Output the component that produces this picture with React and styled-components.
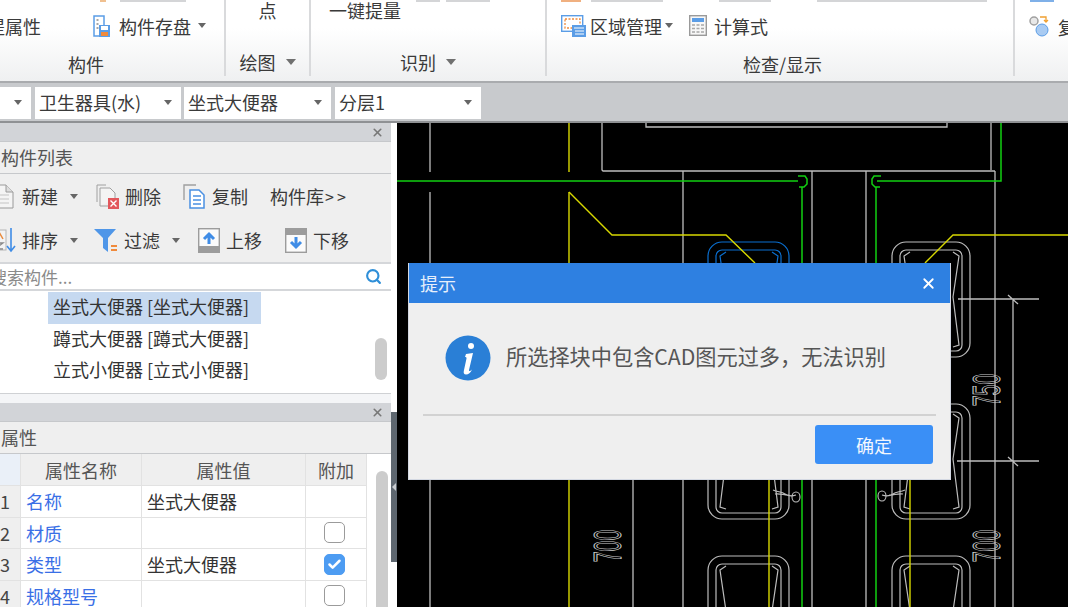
import React from "react"
import styled, { createGlobalStyle } from "styled-components"
import { X, Search, Check } from "lucide-react"

const GlobalStyle = createGlobalStyle`
  html, body {
    margin: 0;
    height: 100%;
    overflow: hidden;
    background: #000;
  }
  body, button {
    font-family: "Noto Sans CJK SC", "Liberation Sans", sans-serif;
  }
`

const Page = styled.div`
  position: relative;
  width: 1068px;
  height: 607px;
  overflow: hidden;
  display: flex;
  flex-direction: column;
  color: #3a3a3a;
  font-size: 18px;
`

// ribbon
const Ribbon = styled.div`
  height: 81px;
  flex: none;
  display: flex;
  margin-left: -52px;
  background: linear-gradient(#ffffff 35%, #eff0f1);
  border-bottom: 2px solid #a9abae;
`
const Group = styled.div`
  width: ${(p) => p.$w}px;
  flex: none;
  height: 76px;
  position: relative;
  display: flex;
  flex-direction: column;
  border-right: 2px solid #d9dadc;
  box-sizing: border-box;
  &:last-child {
    border-right: 0;
  }
`
const GroupBody = styled.div`
  height: 48px;
  padding: ${(p) => p.$pad || "5px 0 0 0"};
  box-sizing: border-box;
  display: flex;
  align-items: ${(p) => (p.$top ? "flex-start" : "center")};
  justify-content: ${(p) => (p.$center ? "center" : "flex-start")};
`
const GroupLabel = styled.div`
  display: flex;
  justify-content: center;
  align-items: center;
  gap: 10px;
  height: 24px;
  line-height: 24px;
  margin-top: ${(p) => (p.$lift ? 2 : 6)}px;
  padding-left: ${(p) => p.$pl || 0}px;
`
const RibbonItem = styled.div`
  display: flex;
  align-items: center;
  gap: ${(p) => p.$gap || 6}px;
  margin-left: ${(p) => p.$ml || 0}px;
  white-space: nowrap;
`
const TopText = styled.span`
  line-height: 20px;
  white-space: nowrap;
`
const TopStub = styled.span`
  width: ${(p) => p.$w}px;
  height: 2px;
  margin-left: ${(p) => p.$ml}px;
  background: ${(p) => p.$c || "#d4d5d7"};
  flex: none;
`
const TopStrip = styled.div`
  position: absolute;
  top: 0;
  left: ${(p) => p.$x}px;
  display: flex;
`
const Caret = styled.i`
  display: inline-block;
  width: 0;
  height: 0;
  flex: none;
  margin-left: ${(p) => p.$ml || 0}px;
  border-left: ${(p) => p.$s || 4.5}px solid transparent;
  border-right: ${(p) => p.$s || 4.5}px solid transparent;
  border-top: ${(p) => (p.$s ? p.$s + 0.5 : 5)}px solid ${(p) => p.$c || "#666"};
`

// combo bar
const ComboBar = styled.div`
  height: 36px;
  flex: none;
  background: #c8cacd;
  border-bottom: 2px solid #8f9194;
  display: flex;
  align-items: center;
  gap: 3px;
  margin-left: -60px;
  padding-top: 2px;
  box-sizing: content-box;
`
const Combo = styled.div`
  width: ${(p) => p.$w}px;
  height: 32px;
  flex: none;
  background: #fff;
  display: flex;
  align-items: center;
  justify-content: space-between;
  padding: 0 9px 2px 4px;
  box-sizing: border-box;
  margin-right: ${(p) => p.$mr || 0}px;
`

// main area
const Main = styled.div`
  flex: 1;
  min-height: 0;
  display: flex;
`
const Side = styled.div`
  width: 397px;
  flex: none;
  display: flex;
  background: #fff;
`
const Panels = styled.div`
  width: 391px;
  flex: none;
  display: flex;
  flex-direction: column;
  background: #f2f3f5;
`
const Strip = styled.div`
  flex: 1;
  padding-top: 289px;
  background: #fff;
`
const Grip = styled.div`
  height: 150px;
  background: #5e6770;
  display: flex;
  align-items: center;
  justify-content: center;
  &::after {
    content: "";
    border-right: 4px solid #c8ccd0;
    border-top: 4px solid transparent;
    border-bottom: 4px solid transparent;
  }
`
const PanelHead = styled.div`
  height: 18px;
  flex: none;
  background: #d2d4d8;
  display: flex;
  align-items: center;
  justify-content: flex-end;
  padding-right: 7px;
  color: #777;
`
const PanelTitle = styled.div`
  height: 31px;
  flex: none;
  line-height: 30px;
  padding-left: 1px;
  background: #efefef;
  border-top: 1px solid #c6c8cb;
  border-bottom: 1px solid #c6c8cb;
  color: #555;
  white-space: nowrap;
`
const Tools = styled.div`
  height: 88px;
  flex: none;
  background: #efefef;
  border-bottom: 2px solid #d5d7da;
  display: flex;
  flex-direction: column;
`
const ToolRow = styled.div`
  height: 44px;
  display: flex;
  align-items: center;
  margin-left: -8px;
`
const Tool = styled.div`
  width: ${(p) => p.$w}px;
  flex: none;
  display: flex;
  align-items: center;
  white-space: nowrap;
  box-sizing: border-box;
  gap: ${(p) => p.$gap || 6}px;
`
const Angle = styled.span`
  letter-spacing: 3px;
  font-size: 16px;
`
const SearchRow = styled.div`
  height: 25px;
  flex: none;
  background: #fff;
  border-bottom: 2px solid #d5d7da;
  display: flex;
  align-items: center;
  justify-content: space-between;
  padding-right: 9px;
  color: #8a8a8a;
  font-size: 17px;
`
const SearchText = styled.span`
  margin-left: -10px;
`
const ListBox = styled.div`
  height: 103px;
  flex: none;
  background: #fff;
  border-bottom: 1px solid #cfd1d4;
  display: flex;
  justify-content: space-between;
  padding-top: 1px;
  box-sizing: border-box;
`
const Rows = styled.div`
  margin-left: 48px;
  display: flex;
  flex-direction: column;
`
const ListRow = styled.div`
  width: 213px;
  height: 31.5px;
  line-height: 29px;
  padding-left: 5px;
  box-sizing: border-box;
  white-space: nowrap;
  color: #333;
  background: ${(p) => (p.$on ? "#c6d9f0" : "transparent")};
`
const Thumb = styled.div`
  width: 12px;
  height: ${(p) => p.$h}px;
  margin: ${(p) => p.$mt}px ${(p) => p.$mr}px 0 0;
  background: #cccccc;
  border-radius: 6px;
  flex: none;
`
const PanelGap = styled.div`
  height: 9px;
  flex: none;
  background: #f4f5f7;
`
const PropsWrap = styled.div`
  flex: 1;
  min-height: 0;
  background: #fff;
  display: flex;
  justify-content: space-between;
  overflow: hidden;
`
const PropsTable = styled.div`
  width: 367px;
  display: flex;
  flex-direction: column;
`
const PropRow = styled.div`
  height: ${(p) => p.$h || 31.5}px;
  flex: none;
  display: grid;
  grid-template-columns: 21px 121px 164px 61px;
`
const Cell = styled.div`
  display: flex;
  align-items: center;
  justify-content: ${(p) => (p.$center ? "center" : "flex-start")};
  padding-left: ${(p) => (p.$center ? 0 : 5)}px;
  border-right: 1px solid #e2e2e2;
  border-bottom: 1px solid #e2e2e2;
  box-sizing: border-box;
  background: ${(p) => p.$bg || "#fff"};
  color: ${(p) => p.$c || "#333"};
  white-space: nowrap;
  overflow: hidden;
`
const NumCell = styled(Cell)`
  padding-left: 0;
  background: ${(p) => p.$bg || "#efefef"};
  color: #444;
`
const CheckBox = styled.span`
  width: 21px;
  height: 21px;
  margin-right: 4px;
  border-radius: 5px;
  box-sizing: border-box;
  display: flex;
  align-items: center;
  justify-content: center;
  background: ${(p) => (p.$on ? "#4d9cf2" : "#fff")};
  border: 1px solid ${(p) => (p.$on ? "#4d9cf2" : "#9b9b9b")};
  color: #fff;
`
const Canvas = styled.svg`
  display: block;
  flex: 1;
  height: 484px;
  background: #000;
`

// dialog
const Dialog = styled.div`
  position: absolute;
  left: 408px;
  top: 263px;
  width: 543px;
  height: 217px;
  box-sizing: border-box;
  border: 1px solid #d3d8e2;
  border-top: 0;
  background: #efefef;
  display: flex;
  flex-direction: column;
`
const DialogHead = styled.div`
  height: 40px;
  flex: none;
  background: #2e80e1;
  color: #e6effb;
  display: flex;
  align-items: center;
  justify-content: space-between;
  padding: 0 13px 0 11px;
`
const DialogBody = styled.div`
  height: 113px;
  flex: none;
  margin: 0 14px;
  border-bottom: 2px solid #d2d2d2;
  box-sizing: border-box;
  display: flex;
  align-items: center;
  gap: 15px;
  padding: 0 0 2px 22px;
`
const Message = styled.span`
  font-size: 21.2px;
  line-height: 30px;
  margin-top: -3px;
  color: #555;
  white-space: nowrap;
`
const DialogFoot = styled.div`
  display: flex;
  justify-content: flex-end;
  padding: 9px 17px 0 0;
`
const OkButton = styled.button`
  width: 118px;
  height: 39px;
  border: 0;
  border-radius: 3px;
  background: #3a8ff6;
  color: #f2f7fe;
  font-size: 18px;
  padding: 0;
`

const NewIcon = () => (
  <svg width="22" height="25" viewBox="0 0 22 25">
    <path d="M1 1h13l7 7v16H1z" fill="#f4f4f4" stroke="#9a9a9a" />
    <path d="M14 1v7h7" fill="#ddd" stroke="#9a9a9a" />
    <path d="M4 11h13M4 15h13M4 19h13" stroke="#c4c4c4" />
  </svg>
)
const DeleteIcon = () => (
  <svg width="23" height="25" viewBox="0 0 23 25">
    <path d="M1 18V1h9" fill="none" stroke="#a0a0a0" />
    <path d="M4 22V4h10l5 5v6" fill="#f4f4f4" stroke="#a0a0a0" />
    <path d="M4 22h8" stroke="#a0a0a0" />
    <rect x="12" y="14" width="11" height="11" fill="#e2575c" />
    <path d="M14.5 16.5l6 6M20.500 16.500l-6 6" stroke="#fff" strokeWidth="1.400" />
  </svg>
)
const CopyIcon = () => (
  <svg width="23" height="25" viewBox="0 0 23 25">
    <path d="M1 16V1h12" fill="none" stroke="#a0a0a0" strokeWidth="1.400" />
    <path d="M7 6h9l5 5v13H7z" fill="#fff" stroke="#4a90e2" strokeWidth="1.500" />
    <path d="M10 12h8M10 16h8M10 20h8" stroke="#4a90e2" strokeWidth="1.400" />
  </svg>
)
const SortIcon = () => (
  <svg width="25" height="26" viewBox="0 0 25 26">
    <rect x="0" y="3" width="14" height="20" fill="#f3f3f3" stroke="#b5b5b5" />
    <path d="M3 12l4-7 4 7" fill="none" stroke="#e98a3c" strokeWidth="1.500" />
    <path d="M3 16h8l-8 6h8" fill="none" stroke="#8a8a8a" strokeWidth="1.300" />
    <path d="M19 1v22M15 19l4 5 4-5" fill="none" stroke="#3f8ce6" strokeWidth="1.600" />
  </svg>
)
const FilterIcon = () => (
  <svg width="24" height="25" viewBox="0 0 24 25">
    <path d="M0 1h22l-8 9v14l-5-4V10z" fill="#4f96e8" />
    <path d="M17 18h6M17 22h6" stroke="#f08a3c" strokeWidth="1.800" />
  </svg>
)
const MoveIcon = ({ down }) => (
  <svg width="22" height="25" viewBox="0 0 22 25">
    <rect x="0.700" y="0.700" width="20.600" height="23.600" fill="#fbfbfb" stroke="#9c9c9c" strokeWidth="1.400" />
    <rect x="0" y={down ? 0 : 18} width="22" height="7" fill="#9c9c9c" />
    {down ? (
      <path d="M11 9v10M6 14l5 5 5-5" fill="none" stroke="#3f8ce6" strokeWidth="3" />
    ) : (
      <path d="M11 16V6M6 11l5-5 5 5" fill="none" stroke="#3f8ce6" strokeWidth="3" />
    )}
  </svg>
)
const StoreIcon = () => (
  <svg width="17" height="22" viewBox="0 0 17 22">
    <path d="M1 1h10v20H1z" fill="#fff" stroke="#5b9de6" strokeWidth="1.500" />
    <path d="M3.500 5h2M3.500 9h2M3.500 13h2" stroke="#8a8a8a" strokeWidth="1.300" />
    <rect x="6" y="10" width="11" height="12" fill="#5b9de6" />
    <rect x="8" y="11" width="7" height="4" fill="#fff" />
    <rect x="8" y="17" width="7" height="4" fill="#f08a3c" />
  </svg>
)
const RegionIcon = () => (
  <svg width="25" height="22" viewBox="0 0 25 22">
    <rect x="0.700" y="0.700" width="21" height="15.600" fill="#fff" stroke="#5b9de6" strokeWidth="1.400" />
    <rect x="4" y="4" width="15" height="9" fill="none" stroke="#f08a3c" strokeWidth="1.300" strokeDasharray="2 1.500" />
    <rect x="11" y="10" width="14" height="12" fill="#5b9de6" />
    <path d="M13 13h10M14 16h9M14 19h9" stroke="#fff" />
  </svg>
)
const CalcIcon = () => (
  <svg width="18" height="21" viewBox="0 0 18 21">
    <rect x="0.700" y="0.700" width="16.600" height="19.600" fill="#f7f7f7" stroke="#9a9a9a" strokeWidth="1.400" />
    <rect x="3" y="3" width="12" height="4" fill="#5b9de6" />
    <path d="M3 10h3M7.500 10h3M12 10h3M3 13.500h3M7.500 13.500h3M12 13.500h3M3 17h3M7.500 17h3M12 17h3" stroke="#a8a8a8" strokeWidth="1.600" />
  </svg>
)
const MatchIcon = () => (
  <svg width="24" height="24" viewBox="0 0 24 24">
    <circle cx="5" cy="6" r="4" fill="#e8e8e8" stroke="#a0a0a0" strokeWidth="1.500" />
    <path d="M11 2h6v5M15 5l2 2 2-2" fill="none" stroke="#f0a030" strokeWidth="1.300" />
    <circle cx="13" cy="15" r="6" fill="#a9cbf2" stroke="#5b9de6" />
    <path d="M19 13a6 6 0 0 1-4 10 6 6 0 0 0 4-10z" fill="#3f8ce6" />
  </svg>
)
const InfoIcon = () => (
  <svg width="46" height="46" viewBox="0 0 46 46">
    <circle cx="23" cy="23" r="22.500" fill="#2a7fd6" />
    <circle cx="26" cy="11" r="3" fill="#fff" />
    <path d="M21 19l7-1-4 17c-.3 1.500.8 1.500 3-.5-1.500 3.500-3.500 5-6 5-2 0-2.600-1.500-2.200-3.500l2.700-12.500c.2-1-.3-1.500-1.500-1.500z" fill="#fff" />
  </svg>
)

const Fixture = ({ x, w, top, color = "#bdbdbd" }) => {
  const r = x + w
  return (
    <g fill="none" stroke={color} strokeWidth="1.200">
      <rect x={x} y={top} width={w} height="115" rx="14" />
      <rect x={x + 8} y={top + 8} width={w - 16} height="101" rx="6" />
      <polyline points={`${x + 18},${top + 10} ${x + 12},${top + 14} ${x + 18},${top + 55} ${x + 12},${top + 103} ${x + 18},${top + 105}`} />
      <polyline points={`${r - 17},${top + 10} ${r - 11},${top + 14} ${r - 17},${top + 55} ${r - 11},${top + 103} ${r - 17},${top + 105}`} />
    </g>
  )
}

const Drawing = () => (
  <Canvas viewBox="397 123 671 484">
    <g fill="none" stroke="#bdbdbd" strokeWidth="1.300">
      <path d="M430 123v49M430 192v415" />
      <path d="M602 123v47l1 1h392M991 123v47" />
      <path d="M646 123v4h301v-4" />
      <path d="M683 171v436M812 171v436M866 171v436M995 171v436M633 470v137" />
      <path d="M958 299h81M957 461h82M1013 299v308M1008 295l10 9M1008 457l10 9" />
    </g>
    <Fixture x={708} w={81} top={242} color="#0a6fd0" />
    <Fixture x={708} w={81} top={404} />
    <Fixture x={708} w={81} top={556} />
    <Fixture x={892} w={78} top={242} />
    <Fixture x={892} w={78} top={404} />
    <Fixture x={892} w={78} top={556} />
    <g fill="none" stroke="#d8d800" strokeWidth="1.400">
      <path d="M569 123v49M569 192v415" />
      <path d="M569 192l43 43h114l29 28" />
      <path d="M1068 235H953l-28 28" />
      <path d="M769 470v137M910 470v137" />
    </g>
    <g fill="none" stroke="#12d012" strokeWidth="1.500">
      <path d="M397 181h401M877 181h124V123" />
      <path d="M798 176h7l2 3v5l-3 3h-5M802 187v420" />
      <path d="M881 176h-7l-2 3v5l3 3h5M876 187v420" />
    </g>
    <g fill="none" stroke="#bdbdbd" strokeWidth="1.100">
      <path d="M773 490c5 2 9 2 12 4s8 2 11 1M775 494c6-1 10 2 14 1" />
      <ellipse cx="796" cy="497" rx="4" ry="5" />
      <path d="M905 490c-5 2-9 2-12 4s-8 2-11 1M903 494c-6-1-10 2-14 1" />
      <ellipse cx="882" cy="496" rx="4" ry="5" />
    </g>
    <g fill="none" stroke="#c8c8c8" strokeWidth="1.100" fontFamily="Liberation Sans, sans-serif" fontSize="39" textAnchor="middle">
      <text transform="translate(621 546) rotate(-90) scale(0.5 1)">700</text>
      <text transform="translate(1000 546) rotate(-90) scale(0.5 1)">700</text>
      <text transform="translate(1000 390) rotate(-90) scale(0.5 1)">750</text>
    </g>
  </Canvas>
)

const App = () => (
  <Page>
    <GlobalStyle />
    <Ribbon>
      <Group $w={278}>
        <TopStrip $x={152}>
          <TopStub $w={6} $ml={0} $c="#f0c090" />
          <TopStub $w={66} $ml={14} />
        </TopStrip>
        <GroupBody>
          <RibbonItem $ml={39}>提属性</RibbonItem>
          <RibbonItem $ml={52} $gap={9}>
            <StoreIcon />
            构件存盘
            <Caret $ml={-2} />
          </RibbonItem>
        </GroupBody>
        <GroupLabel>构件</GroupLabel>
      </Group>
      <Group $w={85}>
        <GroupBody $top $center $pad="0">
          <TopText>点</TopText>
        </GroupBody>
        <GroupLabel $lift>
          绘图
          <Caret $s={5.5} $c="#707070" />
        </GroupLabel>
      </Group>
      <Group $w={236}>
        <GroupBody $top $pad="0 0 0 18px">
          <TopText>一键提量</TopText>
          <TopStub $w={24} $ml={15} />
          <TopStub $w={44} $ml={6} />
        </GroupBody>
        <GroupLabel $lift>
          识别
          <Caret $s={5.5} $c="#707070" />
        </GroupLabel>
      </Group>
      <Group $w={468}>
        <TopStrip $x={14}>
          <TopStub $w={20} $ml={0} $c="#f0b080" />
          <TopStub $w={72} $ml={10} />
          <TopStub $w={52} $ml={56} />
          <TopStub $w={170} $ml={46} />
        </TopStrip>
        <GroupBody $pad="5px 0 0 14px">
          <RibbonItem $gap={4}>
            <RegionIcon />
            区域管理
            <Caret $ml={-1} />
          </RibbonItem>
          <RibbonItem $ml={16} $gap={7}>
            <CalcIcon />
            计算式
          </RibbonItem>
        </GroupBody>
        <GroupLabel $pl={5}>检查/显示</GroupLabel>
      </Group>
      <Group $w={120}>
        <TopStrip $x={15}>
          <TopStub $w={24} $ml={0} $c="#7fb0e8" />
        </TopStrip>
        <GroupBody $pad="5px 0 0 14px">
          <RibbonItem $gap={5}>
            <MatchIcon />
            复制
          </RibbonItem>
        </GroupBody>
      </Group>
    </Ribbon>
    <ComboBar>
      <Combo $w={91} $mr={1}>
        <span>给排水</span>
        <Caret />
      </Combo>
      <Combo $w={146}>
        <span>卫生器具(水)</span>
        <Caret />
      </Combo>
      <Combo $w={147} $mr={1}>
        <span>坐式大便器</span>
        <Caret />
      </Combo>
      <Combo $w={146}>
        <span>分层1</span>
        <Caret />
      </Combo>
    </ComboBar>
    <Main>
      <Side>
        <Panels>
          <PanelHead>
            <X size={13} strokeWidth={3} />
          </PanelHead>
          <PanelTitle>构件列表</PanelTitle>
          <Tools>
            <ToolRow>
              <Tool $w={104} $gap={8}>
                <NewIcon />
                新建
                <Caret $ml={4} />
              </Tool>
              <Tool $w={87}>
                <DeleteIcon />
                删除
              </Tool>
              <Tool $w={87}>
                <CopyIcon />
                复制
              </Tool>
              <Tool $w={90} $gap={1}>
                构件库<Angle>&gt;&gt;</Angle>
              </Tool>
            </ToolRow>
            <ToolRow>
              <Tool $w={102} $gap={5}>
                <SortIcon />
                排序
                <Caret $ml={7} />
              </Tool>
              <Tool $w={104}>
                <FilterIcon />
                过滤
                <Caret $ml={6} />
              </Tool>
              <Tool $w={87}>
                <MoveIcon />
                上移
              </Tool>
              <Tool $w={80}>
                <MoveIcon down />
                下移
              </Tool>
            </ToolRow>
          </Tools>
          <SearchRow>
            <SearchText>搜索构件...</SearchText>
            <Search size={17} strokeWidth={3} color="#2f8fd8" />
          </SearchRow>
          <ListBox>
            <Rows>
              <ListRow $on>坐式大便器 [坐式大便器]</ListRow>
              <ListRow>蹲式大便器 [蹲式大便器]</ListRow>
              <ListRow>立式小便器 [立式小便器]</ListRow>
            </Rows>
            <Thumb $h={42} $mt={46} $mr={4} />
          </ListBox>
          <PanelGap />
          <PanelHead>
            <X size={13} strokeWidth={3} />
          </PanelHead>
          <PanelTitle>属性</PanelTitle>
          <PropsWrap>
            <PropsTable>
              <PropRow $h={32}>
                <NumCell $bg="#eaf0f8" />
                <Cell $center $bg="#efefef" $c="#555">属性名称</Cell>
                <Cell $center $bg="#efefef" $c="#555">属性值</Cell>
                <Cell $center $bg="#efefef" $c="#555">附加</Cell>
              </PropRow>
              <PropRow>
                <NumCell>1</NumCell>
                <Cell $c="#3a6fe6">名称</Cell>
                <Cell>坐式大便器</Cell>
                <Cell $center />
              </PropRow>
              <PropRow>
                <NumCell>2</NumCell>
                <Cell $c="#3a6fe6">材质</Cell>
                <Cell />
                <Cell $center>
                  <CheckBox />
                </Cell>
              </PropRow>
              <PropRow>
                <NumCell>3</NumCell>
                <Cell $c="#3a6fe6">类型</Cell>
                <Cell>坐式大便器</Cell>
                <Cell $center>
                  <CheckBox $on>
                    <Check size={15} strokeWidth={4} />
                  </CheckBox>
                </Cell>
              </PropRow>
              <PropRow>
                <NumCell>4</NumCell>
                <Cell $c="#3a6fe6">规格型号</Cell>
                <Cell />
                <Cell $center>
                  <CheckBox />
                </Cell>
              </PropRow>
            </PropsTable>
            <Thumb $h={200} $mt={17} $mr={3} />
          </PropsWrap>
        </Panels>
        <Strip>
          <Grip />
        </Strip>
      </Side>
      <Drawing />
    </Main>
    <Dialog>
      <DialogHead>
        提示
        <X size={17} strokeWidth={2.500} color="#fff" />
      </DialogHead>
      <DialogBody>
        <InfoIcon />
        <Message>所选择块中包含CAD图元过多，无法识别</Message>
      </DialogBody>
      <DialogFoot>
        <OkButton>确定</OkButton>
      </DialogFoot>
    </Dialog>
  </Page>
)

export default App
